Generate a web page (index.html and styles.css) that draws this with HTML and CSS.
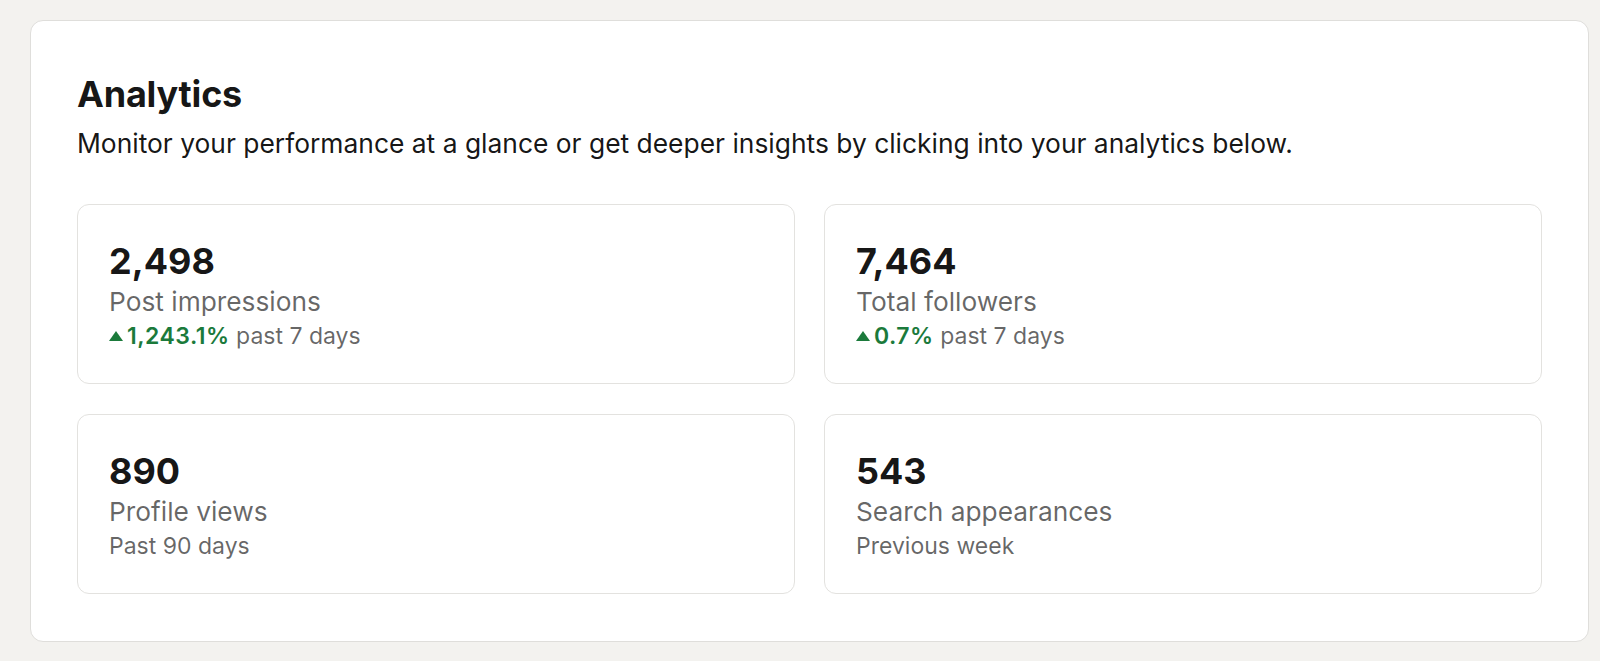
FILE: index.html
```html
<!DOCTYPE html>
<html lang="en">
<head>
<meta charset="utf-8">
<title>Analytics</title>
<link rel="stylesheet" href="styles.css">
</head>
<body>
<section class="panel">
  <h1 class="title">Analytics</h1>
  <p class="subtitle">Monitor your performance at a glance or get deeper insights by clicking into your analytics below.</p>
  <div class="grid">
    <div class="card">
      <div class="value">2,498</div>
      <div class="label">Post impressions</div>
      <div class="meta"><span class="up"><span class="tri"></span>1,243.1%</span> past 7 days</div>
    </div>
    <div class="card">
      <div class="value">7,464</div>
      <div class="label">Total followers</div>
      <div class="meta"><span class="up"><span class="tri"></span>0.7%</span> past 7 days</div>
    </div>
    <div class="card">
      <div class="value">890</div>
      <div class="label">Profile views</div>
      <div class="meta">Past 90 days</div>
    </div>
    <div class="card">
      <div class="value">543</div>
      <div class="label">Search appearances</div>
      <div class="meta">Previous week</div>
    </div>
  </div>
</section>
</body>
</html>
```
FILE: styles.css
```css
html, body {
  margin: 0;
  padding: 0;
  background: #f3f2ef;
}
body {
  font-family: Inter, "Noto Sans", sans-serif;
  color: rgba(0, 0, 0, 0.92);
  padding: 20px 11px 19px 30px;
}
.panel {
  background: #fff;
  border: 1px solid #dfdedb;
  border-radius: 13px;
  padding: 51px 46px 47px 46px;
}
.title {
  margin: 0;
  font-size: 36px;
  font-weight: 700;
  line-height: 44px;
  letter-spacing: -0.2px;
}
.subtitle {
  margin: 11px 0 0;
  font-size: 26.4px;
  line-height: 32px;
}
.grid {
  margin-top: 45px;
  display: grid;
  grid-template-columns: 1fr 1fr;
  column-gap: 29px;
  row-gap: 30px;
}
.card {
  border: 1px solid #e3e2df;
  border-radius: 12px;
  padding: 34px 31px 0;
  height: 180px;
  box-sizing: border-box;
}
.value {
  font-size: 36px;
  font-weight: 700;
  line-height: 44px;
}
.label {
  margin-top: 3px;
  font-size: 26.3px;
  line-height: 32px;
  color: rgba(0, 0, 0, 0.6);
}
.meta {
  margin-top: 4px;
  font-size: 23px;
  line-height: 28px;
  color: rgba(0, 0, 0, 0.6);
}
.up {
  color: #1b7a3b;
  font-weight: 600;
  letter-spacing: 0.5px;
}
.tri {
  display: inline-block;
  width: 0;
  height: 0;
  border-left: 7px solid transparent;
  border-right: 7px solid transparent;
  border-bottom: 10px solid #1b7a3b;
  margin-right: 4px;
  vertical-align: 3px;
}
```
